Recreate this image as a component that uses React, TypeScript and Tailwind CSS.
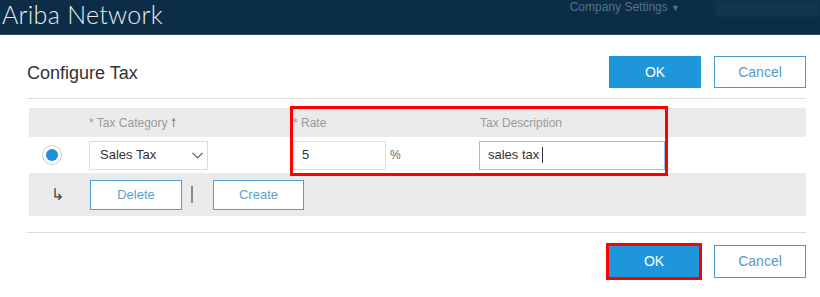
export default function App() {
  return (
    <div className="relative w-[820px] h-[297px] overflow-hidden bg-white font-['Liberation_Sans',Arial,sans-serif]">
      {/* Top bar */}
      <div className="h-[35px] bg-[#0b2d46] border-b border-[#2c4a60] flex items-start">
        <div className="pl-[2px] text-[25px] leading-[29px] font-light text-[#e8eef2] font-['Lato',sans-serif] tracking-[0.3px]">
          Ariba Network
        </div>
        <div className="ml-auto flex items-start">
          <div className="text-[12px] leading-[15px] text-[#52728b] mr-[35px]">
            Company Settings <span className="text-[9px]">▼</span>
          </div>
          <div className="w-[105px] h-[17px] bg-[#11374f] blur-[2px]" />
        </div>
      </div>

      <div className="pl-[27px] pr-[14px]">
        {/* Title row */}
        <div className="mt-[21px] h-[32px] flex items-center">
          <div className="text-[18px] text-[#333333] leading-none pt-[1px]">Configure Tax</div>
          <div className="ml-auto flex gap-[13px]">
            <button className="w-[92px] h-[32px] bg-[#1e96dc] text-white text-[14px]">OK</button>
            <button className="w-[92px] h-[32px] border border-[#4a9ad0] text-[#5898c8] text-[14px]">Cancel</button>
          </div>
        </div>

        <div className="mt-[10px] border-t border-[#dcdcdc]" />

        {/* Table */}
        <div className="mt-[9px] ml-[2px]">
          <div className="h-[29px] bg-[#ebebeb] grid grid-cols-[60px_204px_186px_1fr] items-center text-[12px] text-[#9a9a9a]">
            <div />
            <div>* Tax Category <span className="text-[#888]">🠕</span></div>
            <div>* Rate</div>
            <div className="pl-[1px]">Tax Description</div>
          </div>

          <div className="h-[36px] bg-white grid grid-cols-[60px_204px_186px_1fr] items-center">
            <div className="pl-[13px] flex items-center">
              <div className="w-[20px] h-[20px] rounded-full border border-[#cfcfcf] flex items-center justify-center">
                <div className="w-[12px] h-[12px] rounded-full bg-[#1d8fdb]" />
              </div>
            </div>
            <div>
              <div className="w-[119px] h-[29px] border border-[#cfe0ea] flex items-center pl-[10px] pr-[4px] text-[13px] text-[#333]">
                Sales Tax
                <svg className="ml-auto w-[11px] h-[7px]" viewBox="0 0 11 7" fill="none" stroke="#555" strokeWidth={1.2}>
                  <path d="M0.5 0.8 L5.5 6 L10.5 0.8" />
                </svg>
              </div>
            </div>
            <div className="flex items-center">
              <div className="w-[93px] h-[29px] border border-[#d3e3ec] flex items-center pl-[8px] text-[13px] text-[#333]">
                5
              </div>
              <span className="ml-[4px] text-[12px] text-[#666]">%</span>
            </div>
            <div>
              <div className="w-[186px] h-[29px] border border-[#8fc3df] flex items-center pl-[8px] text-[13px] text-[#333]">
                sales tax
                <span className="ml-[3px] w-px h-[16px] bg-[#333]" />
              </div>
            </div>
          </div>

          <div className="h-[43px] bg-[#ebebeb] flex items-center">
            <div className="w-[61px] pl-[22px] text-[16px] text-[#444] leading-none">↳</div>
            <button className="w-[92px] h-[30px] bg-white border border-[#4f9dd1] text-[#5b9fd0] text-[13px]">Delete</button>
            <div className="ml-[9px] w-[2px] h-[17px] bg-[#8a8a8a]" />
            <button className="ml-[20px] w-[91px] h-[30px] bg-white border border-[#4f9dd1] text-[#5b9fd0] text-[13px]">Create</button>
          </div>
        </div>

        <div className="mt-[16px] border-t border-[#dcdcdc]" />

        {/* Bottom buttons */}
        <div className="mt-[10px] flex justify-end items-center gap-[12px]">
          <div className="border-[3px] border-[#ff0000]">
            <button className="block w-[90px] h-[31px] bg-[#1e96dc] text-white text-[14px]">OK</button>
          </div>
          <button className="w-[92px] h-[33px] border border-[#4a9ad0] text-[#5898c8] text-[14px]">Cancel</button>
        </div>
      </div>

      {/* Annotation */}
      <div className="absolute left-[290px] top-[106px] w-[378px] h-[70px] border-[3px] border-[#ff0000] pointer-events-none" />
    </div>
  );
}
